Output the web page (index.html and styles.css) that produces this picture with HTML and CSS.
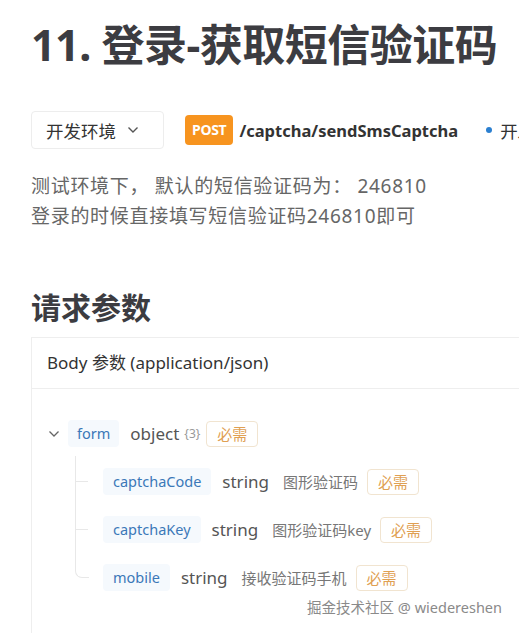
FILE: index.html
```html
<!DOCTYPE html>
<html lang="zh-CN">
<head>
    <meta charset="UTF-8">
    <meta name="viewport" content="width=device-width, initial-scale=1.0">
    <title>登录-获取短信验证码</title>
    <link rel="stylesheet" href="styles.css">
</head>
<body>
    <div class="page">
        <h1 class="doc-title">11. 登录-获取短信验证码</h1>

        <div class="toolbar">
            <div class="env-select">
                <span>开发环境</span>
                <svg class="chevron" width="12" height="8" viewBox="0 0 12 8"><path d="M1.5 1.5 L6 6 L10.5 1.5" fill="none" stroke="#555" stroke-width="1.4"/></svg>
            </div>
            <span class="method">POST</span>
            <span class="path">/captcha/sendSmsCaptcha</span>
            <span class="env-dot"></span>
            <span class="env-name">开发环境</span>
        </div>

        <div class="desc">
            <p>测试环境下， 默认的短信验证码为： 246810</p>
            <p>登录的时候直接填写短信验证码246810即可</p>
        </div>

        <h2 class="section-title">请求参数</h2>

        <div class="card">
            <div class="card-head">Body 参数 (application/json)</div>
            <div class="tree">
                <div class="row">
                    <svg class="toggle" width="12" height="8" viewBox="0 0 12 8"><path d="M1.5 1.5 L6 6 L10.5 1.5" fill="none" stroke="#666" stroke-width="1.3"/></svg>
                    <span class="field">form</span>
                    <span class="type">object</span>
                    <span class="count">{3}</span>
                    <span class="required">必需</span>
                </div>
                <div class="children">
                    <div class="row child">
                        <span class="field">captchaCode</span>
                        <span class="type">string</span>
                        <span class="note">图形验证码</span>
                        <span class="required">必需</span>
                    </div>
                    <div class="row child">
                        <span class="field">captchaKey</span>
                        <span class="type">string</span>
                        <span class="note">图形验证码key</span>
                        <span class="required">必需</span>
                    </div>
                    <div class="row child last">
                        <span class="field">mobile</span>
                        <span class="type">string</span>
                        <span class="note">接收验证码手机</span>
                        <span class="required">必需</span>
                    </div>
                </div>
            </div>
        </div>
    </div>
    <div class="watermark">掘金技术社区 @ wiedereshen</div>
</body>
</html>
```

FILE: styles.css
```css
html, body {
    margin: 0;
    height: 100%;
    overflow: hidden;
}

body {
    background-color: #fff;
    font-family: "Noto Sans", "Noto Sans CJK SC", sans-serif;
    color: #333;
    position: relative;
}

.page {
    padding-left: 31px;
}

.doc-title {
    margin: 17px 0 0;
    font-size: 43px;
    line-height: 56px;
    font-weight: 700;
    color: #3c3c41;
    white-space: nowrap;
    letter-spacing: -0.5px;
}

/* toolbar */
.toolbar {
    display: flex;
    align-items: center;
    margin-top: 38px;
    white-space: nowrap;
}

.toolbar > * {
    flex-shrink: 0;
}

.env-select {
    display: flex;
    align-items: center;
    gap: 11px;
    box-sizing: border-box;
    width: 133px;
    height: 38px;
    padding-left: 14px;
    border: 1px solid #ededed;
    border-radius: 4px;
    font-size: 17.5px;
    color: #333;
}

.method {
    margin-left: 21px;
    height: 30px;
    line-height: 30px;
    padding: 0 7px;
    background-color: #f7941f;
    color: #fff;
    font-weight: 700;
    font-size: 14px;
    border-radius: 4px;
    letter-spacing: -0.3px;
}

.path {
    margin-left: 6px;
    font-size: 16.5px;
    font-weight: 700;
    color: #333;
}

.env-dot {
    width: 6px;
    height: 6px;
    border-radius: 50%;
    background-color: #2b7fd0;
    margin-left: 28px;
}

.env-name {
    margin-left: 8px;
    font-size: 17.5px;
    color: #333;
}

/* description */
.desc {
    margin-top: 22px;
}

.desc p {
    margin: 0;
    font-size: 19px;
    line-height: 30px;
    letter-spacing: 0.7px;
    color: #666;
    white-space: nowrap;
}

.section-title {
    margin: 57px 0 0;
    font-size: 30px;
    line-height: 40px;
    font-weight: 700;
    color: #3c3c41;
}

/* params card */
.card {
    margin-top: 9px;
    width: 620px;
    height: 400px;
    border-top: 1px solid #eeeeee;
    border-left: 1px solid #eeeeee;
}

.card-head {
    height: 50px;
    line-height: 50px;
    padding-left: 15px;
    font-size: 17px;
    color: #333;
    border-bottom: 1px solid #eeeeee;
}

.tree {
    padding: 31px 0 0 16px;
}

.row {
    display: flex;
    align-items: center;
    height: 27px;
    white-space: nowrap;
}

.toggle {
    margin-right: 8px;
}

.field {
    height: 27px;
    line-height: 27px;
    padding: 0 9px;
    background-color: #f5f9fd;
    color: #3b78b8;
    font-size: 14.5px;
    border-radius: 4px;
}

.type {
    margin-left: 11px;
    font-size: 17px;
    color: #555;
}

.count {
    margin-left: 5px;
    font-size: 12px;
    color: #999;
}

.note {
    margin-left: 15px;
    font-size: 15px;
    color: #777;
}

.required {
    margin-left: 8px;
    box-sizing: border-box;
    height: 26px;
    line-height: 24px;
    padding: 0 10px;
    border: 1px solid #f1e4d0;
    border-radius: 4px;
    color: #e0a052;
    font-size: 15px;
}

.row .count + .required {
    margin-left: 6px;
}

.child .field {
    padding: 0 10px;
}

.child .type {
    margin-left: 11px;
}

.child .note {
    margin-left: 14px;
}

.child .note + .required {
    margin-left: 9px;
}

/* tree children and connector lines */
.children {
    margin-left: 27px;
}

.child {
    position: relative;
    margin-top: 21px;
    padding-left: 28px;
}

.child::before {
    content: "";
    position: absolute;
    left: 0;
    top: -21px;
    height: 48px;
    border-left: 1px solid #e8e8e8;
}

.child::after {
    content: "";
    position: absolute;
    left: 0;
    top: 13px;
    width: 13px;
    border-top: 1px solid #e8e8e8;
}

.child:first-child::before {
    top: -12px;
    height: 39px;
}

.child.last::before {
    width: 13px;
    height: 34px;
    border-bottom: 1px solid #e8e8e8;
    border-bottom-left-radius: 7px;
}

.child.last::after {
    display: none;
}

.watermark {
    position: absolute;
    right: 17px;
    bottom: 16px;
    font-size: 14.5px;
    color: #8a8a8a;
}
```
